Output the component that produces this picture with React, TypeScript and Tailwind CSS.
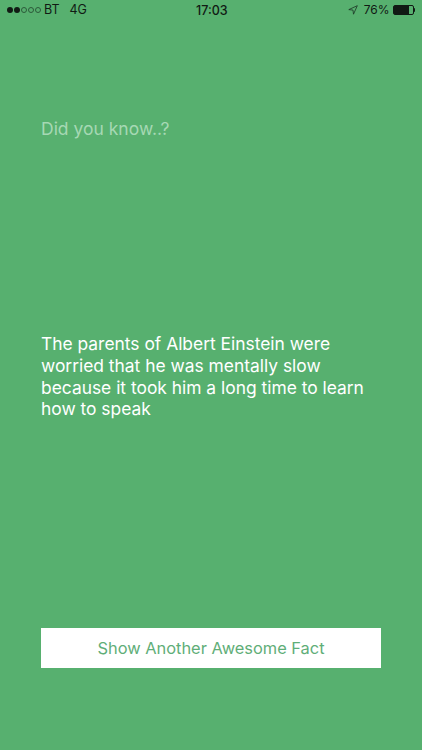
export default function App() {
  return (
    <div className="h-[750px] w-[422px] overflow-hidden bg-[#57b06f] font-['Inter','Liberation_Sans',sans-serif]">
      {/* status bar */}
      <div className="relative flex h-[20px] items-center justify-between pl-[7px] pr-[7px] text-[12.5px] text-[#111a14]">
        <div className="flex items-center">
          <div className="flex gap-[1px]">
            <span className="h-[6px] w-[6px] rounded-full bg-[#111a14]" />
            <span className="h-[6px] w-[6px] rounded-full bg-[#111a14]" />
            <span className="h-[6px] w-[6px] rounded-full border border-[#2c5a3a]" />
            <span className="h-[6px] w-[6px] rounded-full border border-[#2c5a3a]" />
            <span className="h-[6px] w-[6px] rounded-full border border-[#2c5a3a]" />
          </div>
          <span className="ml-[3px]">BT</span>
          <span className="ml-[10px]">4G</span>
        </div>
        <span className="absolute left-[196px] top-[2px] font-medium">17:03</span>
        <div className="flex items-center">
          <svg width="10" height="10" viewBox="0 0 10 10" fill="none" stroke="#1c3324" strokeWidth="0.8">
            <path d="M9.3 0.7 L0.8 4.6 L5 5.1 L5.5 9.2 Z" />
          </svg>
          <span className="ml-[6px] text-[12px]">76%</span>
          <div className="ml-[3px] flex items-center">
            <div className="h-[10px] w-[21px] rounded-[2px] border border-[#111a14]">
              <div className="h-full w-[15px] bg-[#111a14]" />
            </div>
            <div className="h-[4px] w-[1.5px] rounded-r-sm bg-[#111a14]" />
          </div>
        </div>
      </div>

      <div className="flex flex-col px-[41px]">
        <p className="mt-[98px] text-[17.5px] leading-[22px] text-[#a6d8b4]">Did you know..?</p>
        <p className="mt-[193px] h-[295px] text-[17.4px] leading-[21.8px] text-white">
          The parents of Albert Einstein were worried that he was mentally slow because it took him a long time to learn how to speak
        </p>
        <button className="h-[40px] w-[340px] bg-white text-[16.4px] text-[#5fae78]">Show Another Awesome Fact</button>
      </div>
    </div>
  );
}
